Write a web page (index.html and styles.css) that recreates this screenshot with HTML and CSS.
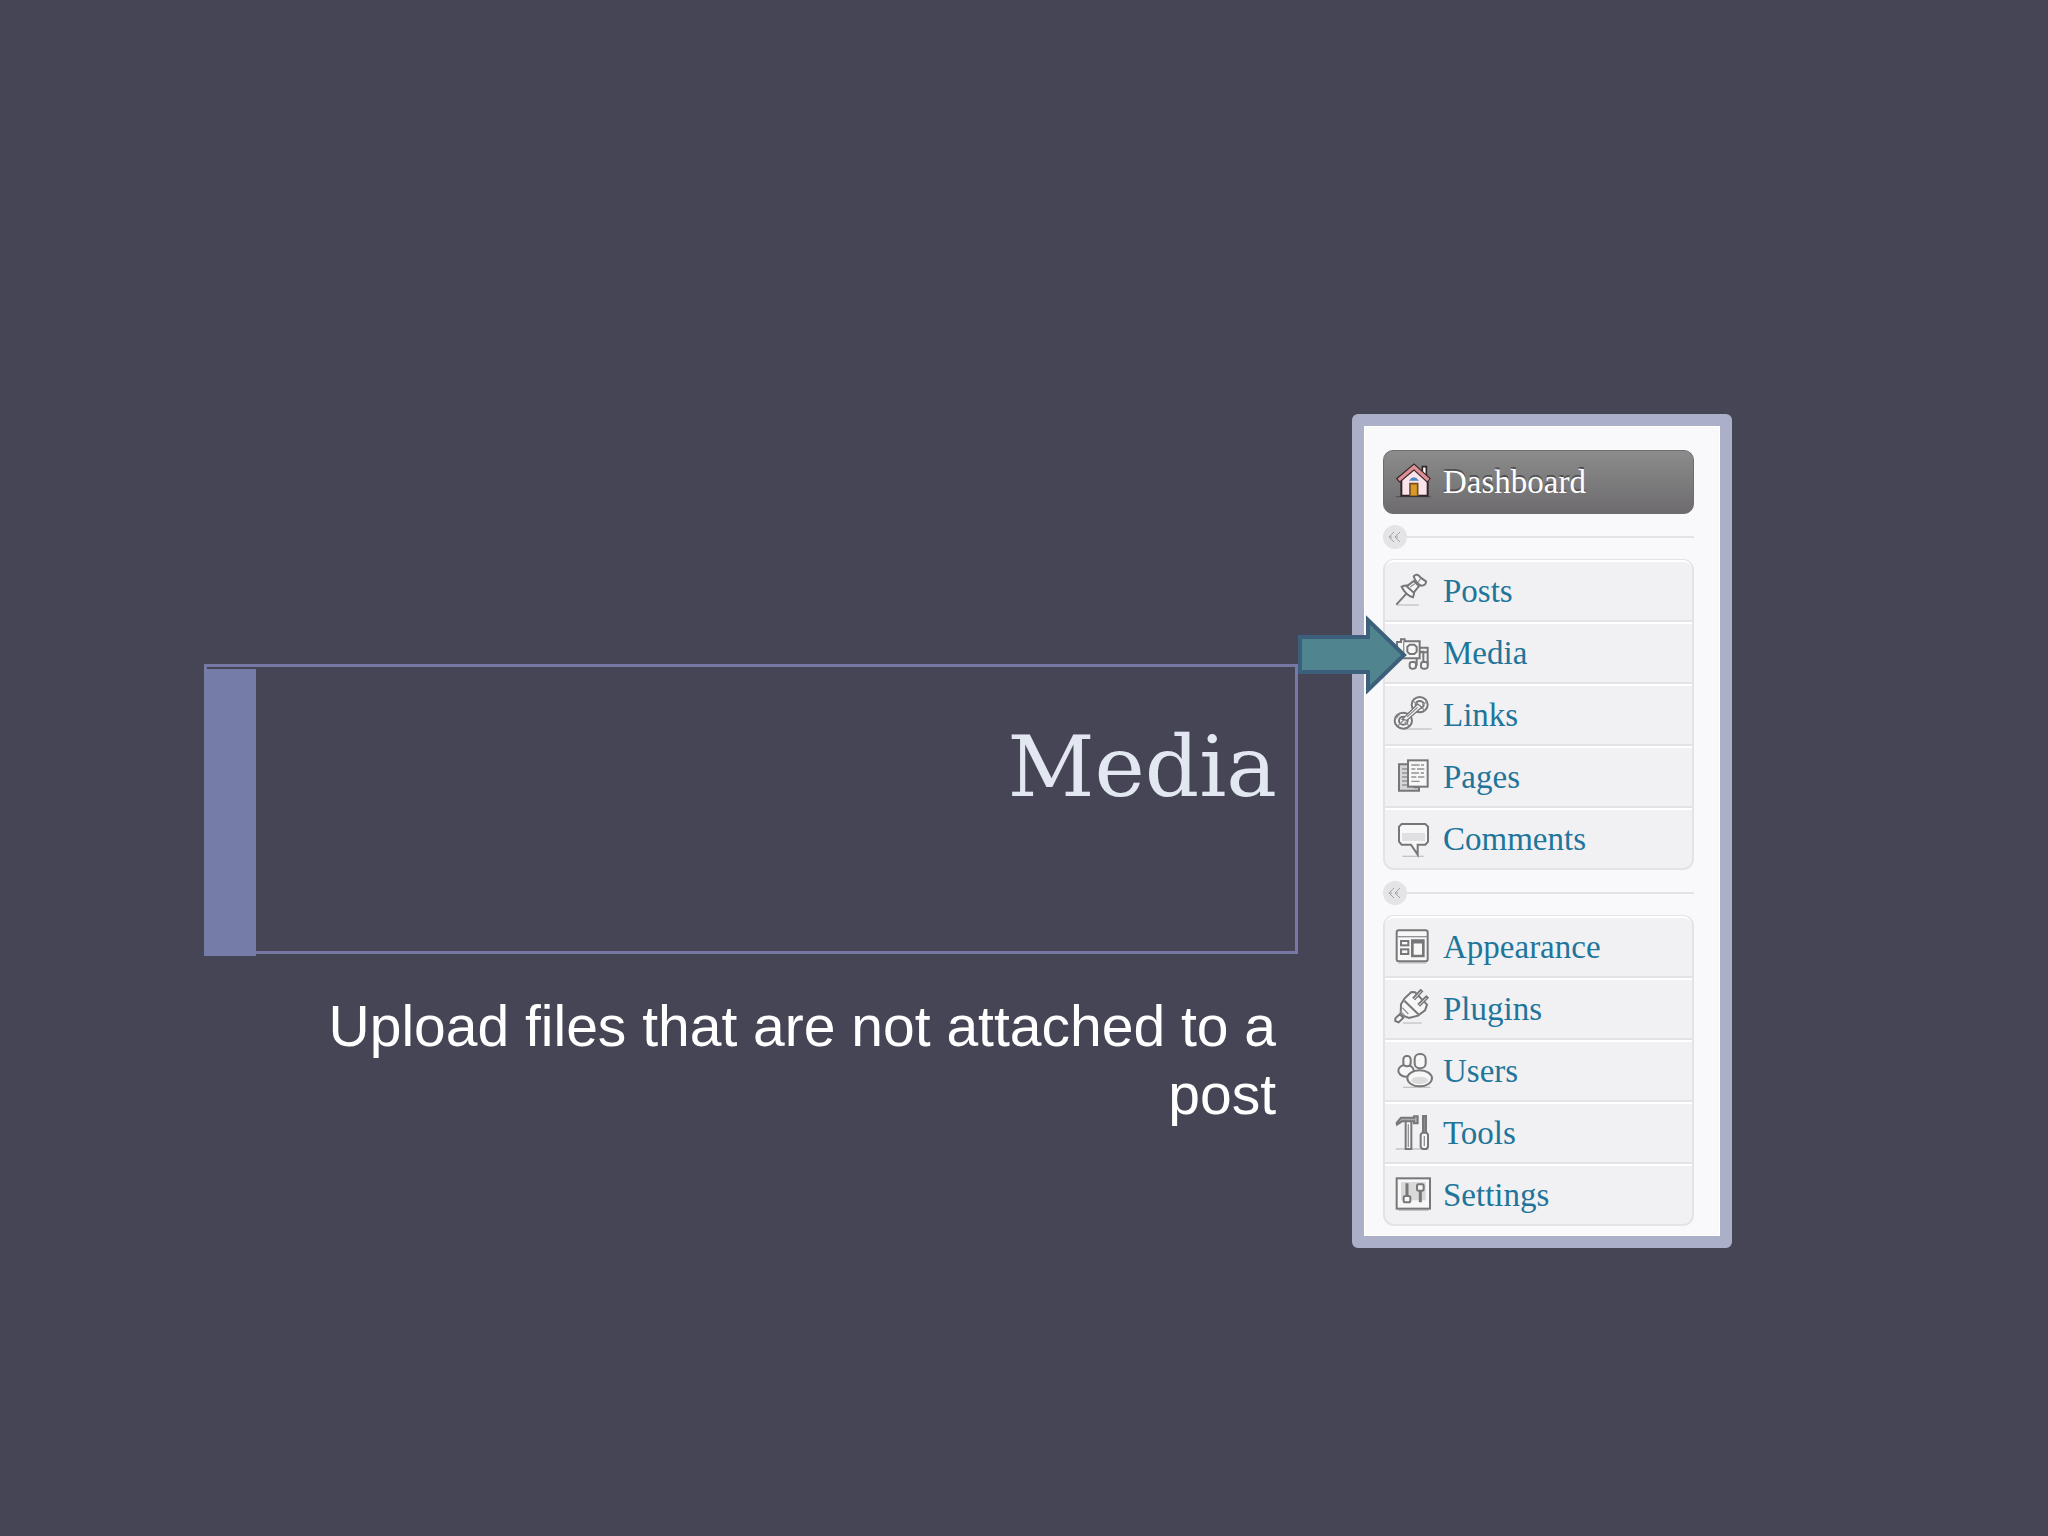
FILE: index.html
```
<!DOCTYPE html>
<html lang="en">
<head>
    <meta charset="UTF-8">
    <meta name="viewport" content="width=device-width, initial-scale=1.0">
    <title>Media</title>
    <link rel="stylesheet" href="styles.css">
</head>
<body>
    <main class="slide">
        <section class="slide-text">
            <div class="title-box">
                <h1>Media</h1>
            </div>
            <p class="subtitle">Upload files that are not attached to a post</p>
        </section>
        <nav class="admin-menu" aria-label="Admin menu">
            <a class="menu-item dashboard" href="#">
                <svg class="icon" viewBox="0 0 120 120">
                    <path d="M8 104H114" stroke="#555" stroke-width="4"/>
                    <path d="M88 34V14H100V46" fill="#fff" stroke="#33262a" stroke-width="5"/>
                    <path d="M25 54L63 20L104 54V101H25Z" fill="#fbe3ea" stroke="#33262a" stroke-width="6"/>
                    <path d="M14 56L63 15L108 56" fill="none" stroke="#3a2529" stroke-width="17"/>
                    <path d="M17 54L63 15L106 54" fill="none" stroke="#dc9294" stroke-width="10"/>
                    <path d="M48 56Q62 36 78 56Z" fill="#4b86c0" stroke="none"/>
                    <path d="M51 101V65H74V101" fill="#d79a25" stroke="#765022" stroke-width="5"/>
                </svg>
                <span>Dashboard</span>
            </a>
            <div class="separator">
                <button type="button" aria-label="Collapse menu">
                    <svg viewBox="0 0 24 24"><path d="M11 7L6 12L11 17M17 7L12 12L17 17M9 12H6M15 12H12"/></svg>
                </button>
            </div>
            <ul class="menu-group">
                <li>
                    <a class="menu-item" href="#">
                        <svg class="icon" viewBox="0 0 120 120">
                            <path class="shadow" d="M10 102H78"/>
                            <path d="M10 101L40 68" stroke-width="6"/>
                            <path d="M26 47Q42 39 56 48Q68 61 60 79Q51 77 42 69Q31 60 26 47Z"/>
                            <path d="M41 46L62 30L78 45L62 65Z"/>
                            <path d="M62 16Q72 5 83 20L99 31Q100 43 84 44Q68 36 62 16Z"/>
                            <path class="thin" d="M52 48L65 38M83 22L76 33"/>
                        </svg>
                        <span>Posts</span>
                    </a>
                </li>
                <li>
                    <a class="menu-item" href="#">
                        <svg class="icon" viewBox="0 0 120 120">
                            <path d="M12 27H24V19H35V25H80V76H12Z"/>
                            <path class="thin" d="M32 25V76"/>
                            <path d="M50 35H64L71 42V56L64 63H50L43 56V42Z"/>
                            <path d="M81 44H104V98M91 98V56H81M71 98V76M104 58H81" fill="none"/>
                            <rect x="50" y="87" width="19" height="20" rx="7"/>
                            <rect x="84" y="87" width="20" height="20" rx="7"/>
                        </svg>
                        <span>Media</span>
                    </a>
                    <svg class="arrow" viewBox="0 0 110 80" aria-hidden="true">
                        <path d="M3 23H71V6L107 41L71 76V58H3Z"/>
                    </svg>
                </li>
                <li>
                    <a class="menu-item" href="#">
                        <svg class="icon" viewBox="0 0 120 120">
                            <path class="shadow" d="M30 102H116"/>
                            <ellipse cx="80" cy="29" rx="24" ry="23"/>
                            <ellipse cx="80" cy="29" rx="12" ry="11"/>
                            <ellipse cx="31" cy="77" rx="26" ry="24"/>
                            <ellipse cx="31" cy="77" rx="13" ry="12"/>
                            <path class="thin" d="M7 72L20 58M15 92L43 64M48 92L35 80M60 18L73 29M102 19L88 31M95 47L85 36"/>
                            <path d="M28 73L42 76L86 37L74 27Z" stroke-width="4"/>
                            <path class="thin" d="M42 66L74 37"/>
                        </svg>
                        <span>Links</span>
                    </a>
                </li>
                <li>
                    <a class="menu-item" href="#">
                        <svg class="icon" viewBox="0 0 120 120">
                            <path d="M18 22H65V91H78V101H18Z" fill="#d5d5d7"/>
                            <path class="thin" d="M27 36H42M27 48H42M27 60H42M27 72H42M27 84H42"/>
                            <rect x="45" y="10" width="59" height="79"/>
                            <path class="thin" d="M55 24H80M84 24H93M55 36H67M72 36H94M55 48H78M83 48H93M55 60H70M75 60H94M55 73H80"/>
                        </svg>
                        <span>Pages</span>
                    </a>
                </li>
                <li>
                    <a class="menu-item" href="#">
                        <svg class="icon" viewBox="0 0 120 120">
                            <path class="shadow" d="M28 112H92"/>
                            <path d="M26 15H97L105 23V68L97 77H74V107L54 77H26L18 68V23Z"/>
                            <path d="M27 42H96V66H27Z" fill="#e0e0e2" stroke="none"/>
                        </svg>
                        <span>Comments</span>
                    </a>
                </li>
            </ul>
            <div class="separator">
                <button type="button" aria-label="Collapse menu">
                    <svg viewBox="0 0 24 24"><path d="M11 7L6 12L11 17M17 7L12 12L17 17M9 12H6M15 12H12"/></svg>
                </button>
            </div>
            <ul class="menu-group">
                <li>
                    <a class="menu-item" href="#">
                        <svg class="icon" viewBox="0 0 120 120">
                            <path class="shadow" d="M16 108H100"/>
                            <rect x="11" y="10" width="93" height="93" rx="6"/>
                            <path class="thin" d="M13 29H103"/>
                            <rect x="24" y="42" width="22" height="13"/>
                            <rect x="24" y="67" width="22" height="14"/>
                            <path d="M58 41H91V87H58Z" stroke-width="8"/>
                            <path d="M58 45H91" stroke-width="9"/>
                        </svg>
                        <span>Appearance</span>
                    </a>
                </li>
                <li>
                    <a class="menu-item" href="#">
                        <svg class="icon" viewBox="0 0 120 120">
                            <path class="shadow" d="M30 102H86"/>
                            <path d="M20 76L7 88V96L17 100L31 86Z"/>
                            <path d="M23 77L24 46L35 28L55 9L66 10L102 47L96 64L75 80L48 87Z"/>
                            <path d="M34 35L76 76" fill="none"/>
                            <path class="thin" d="M22 67L35 80M28 56L46 75"/>
                            <path d="M62 30L87 3M77 49L104 22" stroke-width="12"/>
                            <path d="M64 29L84 7M79 48L100 27" stroke="#eee" stroke-width="3"/>
                        </svg>
                        <span>Plugins</span>
                    </a>
                </li>
                <li>
                    <a class="menu-item" href="#">
                        <svg class="icon" viewBox="0 0 120 120">
                            <path class="shadow" d="M30 109H112"/>
                            <ellipse cx="39" cy="59" rx="23" ry="18"/>
                            <rect x="31" y="15" width="22" height="31" rx="10"/>
                            <rect x="65" y="9" width="33" height="43" rx="15"/>
                            <ellipse cx="80" cy="82" rx="37" ry="24"/>
                            <ellipse cx="80" cy="88" rx="25" ry="11" fill="#dcdcdd" stroke="none"/>
                        </svg>
                        <span>Users</span>
                    </a>
                </li>
                <li>
                    <a class="menu-item" href="#">
                        <svg class="icon" viewBox="0 0 120 120">
                            <path class="shadow" d="M8 108H108"/>
                            <rect x="38" y="24" width="17" height="84"/>
                            <path d="M11 30L24 14H63V10H74V31H63V25H27L12 35Z" fill="#aaa"/>
                            <path d="M90 9H99V59H90Z" fill="#888"/>
                            <path d="M88 59H101L105 65V102L100 108H88L83 102V65Z"/>
                            <path class="thin" d="M94 69V99M46 34V102"/>
                        </svg>
                        <span>Tools</span>
                    </a>
                </li>
                <li>
                    <a class="menu-item" href="#">
                        <svg class="icon" viewBox="0 0 120 120">
                            <path class="shadow" d="M16 106H106"/>
                            <rect x="11" y="10" width="100" height="91"/>
                            <path d="M24 21H98V76H24Z" fill="#d9d9da" stroke="none"/>
                            <path d="M42 25V65M82 42V82" stroke-width="9"/>
                            <rect x="32" y="63" width="20" height="19" rx="5"/>
                            <rect x="72" y="28" width="20" height="19" rx="5"/>
                        </svg>
                        <span>Settings</span>
                    </a>
                </li>
            </ul>
        </nav>
    </main>
</body>
</html>
```
FILE: styles.css
```
* {
    margin: 0;
    padding: 0;
    box-sizing: border-box;
}
body {
    background: #464555;
    font-family: "Liberation Sans", Arial, sans-serif;
}
.slide {
    min-height: 100vh;
    padding: 414px 316px 40px 204px;
    display: flex;
    align-items: flex-start;
    gap: 54px;
}

.slide-text {
    flex: 1;
    margin-top: 250px;
    text-align: right;
}
.title-box {
    min-height: 290px;
    border: 3px solid #7778a4;
    display: flex;
    justify-content: space-between;
}
/* accent strip, runs over the bottom border */
.title-box::before {
    content: '';
    width: 52px;
    margin: 2px 0 -5px -3px;
    background: #757ca7;
}
.title-box h1 {
    padding: 50px 18px 0 0;
    font-family: "DejaVu Serif", serif;
    font-size: 85px;
    line-height: 100px;
    font-weight: normal;
    color: #e2e7f2;
}
.subtitle {
    margin-top: 38px;
    padding: 0 22px 0 52px;
    font-size: 57px;
    line-height: 68px;
    color: #fff;
}

.admin-menu {
    flex: 0 0 380px;
    padding: 24px 26px 10px 19px;
    border: 12px solid #acafc8;
    border-radius: 6px;
    background: #f9f9fc;
    background-clip: padding-box;
    box-shadow: inset 0 0 0 1px #fff;
}
.menu-item {
    height: 100%;
    padding-left: 8px;
    display: flex;
    align-items: center;
    gap: 10px;
    font-family: "Liberation Serif", serif;
    font-size: 33px;
    color: #21759b;
    text-decoration: none;
}
.menu-item.dashboard {
    height: 64px;
    padding-left: 9px;
    border: 1px solid #6d6c6e;
    border-radius: 10px;
    background: linear-gradient(#8c8c8c, #6d6b6e);
    color: #fff;
    text-shadow: 0 -2px 0 #505050;
}
.icon {
    width: 40px;
    height: 40px;
    fill: #f7f7f8;
    stroke: #77777a;
    stroke-width: 6px;
}
.icon .thin {
    fill: none;
    stroke: #939395;
    stroke-width: 4px;
}
.icon .shadow {
    stroke: #c4c4c6;
    stroke-width: 4px;
}

.separator {
    height: 45px;
    display: flex;
    align-items: center;
}
.separator::after {
    content: '';
    flex: 1;
    height: 2px;
    background: #e3e2e5;
}
.separator button {
    width: 24px;
    height: 24px;
    border: none;
    border-radius: 50%;
    background: #e4e4e6;
    cursor: pointer;
}
.separator svg {
    display: block;
    fill: none;
    stroke: #a2a2a5;
    stroke-width: 1px;
}

.menu-group {
    list-style: none;
    border: 2px solid #e3e2e5;
    border-top-width: 1px;
    border-radius: 11px;
    background: #f1f1f3;
}
.menu-group li {
    position: relative;
    height: 62px;
    border-top: 2px solid #fff;
    border-bottom: 2px solid #e3e2e5;
}
.menu-group li:first-child {
    border-radius: 9px 9px 0 0;
}
.menu-group li:last-child {
    border-bottom: none;
    height: 60px;
}
.arrow {
    position: absolute;
    left: -88px;
    top: -10px;
    width: 110px;
    height: 80px;
    fill: #50858f;
    stroke: #3c607b;
    stroke-width: 4px;
}
```
